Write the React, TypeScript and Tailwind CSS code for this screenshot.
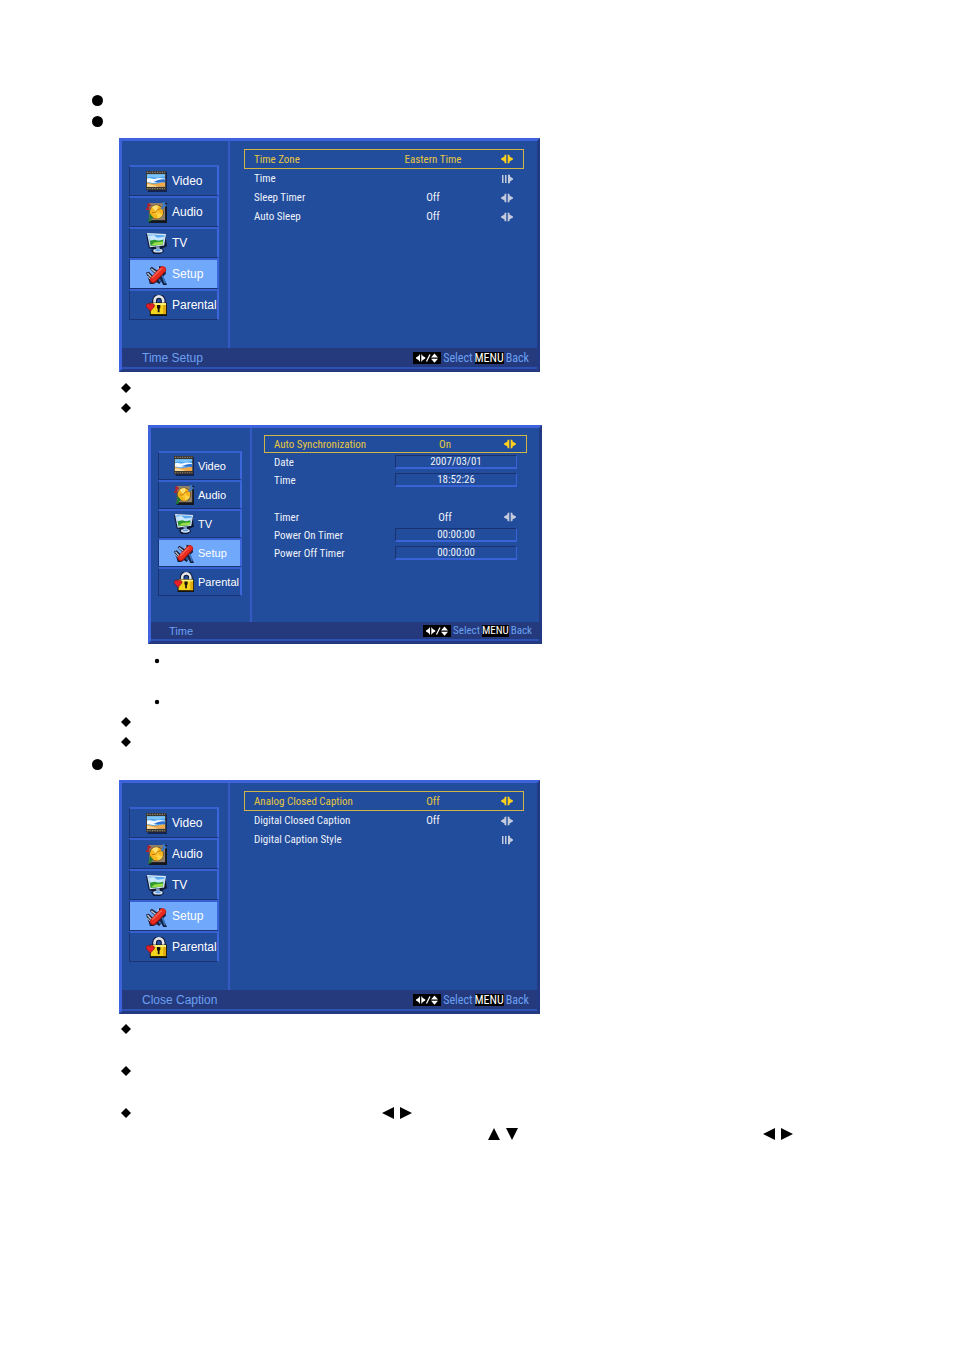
import type { ReactNode } from "react";
import { clsx } from "clsx";

type MenuRow = {
  label: string;
  value?: string;
  control: "adjust" | "enter" | "field" | "blank";
};

type MenuPanelProps = {
  title: string;
  rows: MenuRow[];
  compact?: boolean;
};

const timeSetupRows: MenuRow[] = [
  { label: "Time Zone", value: "Eastern Time", control: "adjust" },
  { label: "Time", control: "enter" },
  { label: "Sleep Timer", value: "Off", control: "adjust" },
  { label: "Auto Sleep", value: "Off", control: "adjust" },
];

const timeRows: MenuRow[] = [
  { label: "Auto Synchronization", value: "On", control: "adjust" },
  { label: "Date", value: "2007/03/01", control: "field" },
  { label: "Time", value: "18:52:26", control: "field" },
  { label: "", control: "blank" },
  { label: "Timer", value: "Off", control: "adjust" },
  { label: "Power On Timer", value: "00:00:00", control: "field" },
  { label: "Power Off Timer", value: "00:00:00", control: "field" },
];

const captionRows: MenuRow[] = [
  { label: "Analog Closed Caption", value: "Off", control: "adjust" },
  { label: "Digital Closed Caption", value: "Off", control: "adjust" },
  { label: "Digital Caption Style", control: "enter" },
];

function VideoIcon() {
  return (
    <svg viewBox="0 0 22 22" className="size-full" aria-hidden="true">
      <path d="M1 1h21v21H2z" fill="#14224f" />
      <path d="M0 0h21v20H0z" fill="#3a3630" />
      <path d="M1 1.500h19M1 18.500h19" stroke="#8f8878" strokeWidth="1.200" strokeDasharray="1.300 1.300" />
      <path d="M1 3.500h19v13H1z" fill="#4fa3ee" />
      <path d="M1 3.500h19v2L12 7 6 6 1 7z" fill="#7cc4f8" />
      <path d="M1 8c4-1 6 1 9 0s6-1 10 0v2.500c-6-1-8 2-12 2s-5-1-7-.5z" fill="#f4faff" />
      <path d="M8 11c5-1 7-3 12-2v3c-5-1-8 0-12-1z" fill="#2c70d4" />
      <path d="M1 12c5 1 7 2 11 1s5-1 8-1v4.500H1z" fill="#f2a94a" />
      <path d="M1 13.500c4 0 7 1.500 12 3H1z" fill="#fbdc9c" />
    </svg>
  );
}

function AudioIcon() {
  return (
    <svg viewBox="0 0 22 22" className="size-full" aria-hidden="true">
      <path d="M3 1h19v21H3z" fill="#15171f" />
      <path d="M3 1h17v18H3z" fill="#8c7e68" />
      <circle cx="11" cy="10.500" r="7.500" fill="#4a3210" />
      <circle cx="11" cy="10.500" r="7" fill="#f6b41d" />
      <path d="M11 10.500 6 5.500a7 7 0 0 1 7-1.700z" fill="#ffe070" />
      <path d="m11 10.500 6.500 2.500a7 7 0 0 1-5 4.300z" fill="#ffd54a" />
      <path d="m8 12 4-4 2 3-3 3z" fill="#ffc832" />
      <path d="m6 11 4 0 2-3 4-1" stroke="#b46a10" strokeWidth=".8" fill="none" />
      <path d="M2.500 2v6M0 7.500h3M2 2l3 2" stroke="#b8202a" strokeWidth="2" fill="none" />
      <path d="M18.500 0v5L16 7M18 2l3.500 2" stroke="#3b78c8" strokeWidth="2" fill="none" />
      <path d="M4.500 13v7M4 14l3 3M2 19.500h3" stroke="#1f7a36" strokeWidth="2" fill="none" />
    </svg>
  );
}

function TvIcon() {
  return (
    <svg viewBox="0 0 22 22" className="size-full" aria-hidden="true">
      <path d="m0 1 20 0 2 13-5 2 2 3-4 3H8l-3-4 3-1-5-1z" fill="#0d1834" />
      <path d="m1 0 20 1-2 12L4 15z" fill="#d9e4ef" />
      <path d="m2.500 1.500 17 .8-1.700 9.700L5 13.500z" fill="#58a9f4" />
      <path d="m3 3 5-1 4 3 7-1-.8 4L4 8z" fill="#c8e6fd" />
      <path d="m4 8 5-1 4 1 5-1-.6 5L5 13.500z" fill="#2f9a2c" />
      <path d="m5 13 4-3 9-1-.5 3z" fill="#9be048" />
      <path d="M10 14h4l1 3.500h-4z" fill="#7d93b4" />
      <ellipse cx="12.500" cy="18.500" rx="5" ry="2" fill="#cfe2f6" />
      <ellipse cx="12.500" cy="18" rx="3" ry="1" fill="#5c9ee4" />
    </svg>
  );
}

function SetupIcon() {
  return (
    <svg viewBox="0 0 22 22" className="size-full" aria-hidden="true">
      <path d="m0 9 3-1 5 5 2-2-6-6 2-2 6 4 2-5 3 1 3 3 1 4-3 3 4 9h-4l-2-4-2 3-3-2-3 2H4l-1-4z" fill="#16203c" />
      <path d="m1.500 9.500 4.500 5M5.500 5l5 4M12.500 3l1 3" stroke="#b9c4d0" strokeWidth="1.500" />
      <path d="m1.500 12.500 3 3.500" stroke="#e6ebf0" strokeWidth="1" />
      <path d="m17 12 3 8M14 16l1 2.500" stroke="#3674c4" strokeWidth="1.800" />
      <path d="M7.500 16.500 17.500 6" stroke="#a81612" strokeWidth="7" strokeLinecap="round" />
      <path d="m7.500 15.800 10-10.300" stroke="#ea2c20" strokeWidth="5.800" strokeLinecap="round" />
      <path d="m7 14 9-9" stroke="#f76a58" strokeWidth="1.300" strokeLinecap="round" />
    </svg>
  );
}

function ParentalIcon() {
  return (
    <svg viewBox="0 0 22 22" className="size-full" aria-hidden="true">
      <path d="M9 9V6a4.500 4.500 0 0 1 9 0v3" stroke="#101733" strokeWidth="5" fill="none" />
      <path d="M9 9V6a4.500 4.500 0 0 1 9 0v3" stroke="#e3e6ea" strokeWidth="2.800" fill="none" />
      <path d="M4 8h18v14H4z" fill="#17130a" />
      <path d="M5 8.500h16V20H5z" fill="#f5d51c" />
      <path d="M5 8.500h16v2H5z" fill="#fff17a" />
      <path d="M18 10.500h3V20h-3z" fill="#dfa90f" />
      <path d="M11.500 10.500h3.500v3l-.8.8V18h-1.900v-3.700l-.8-.8z" fill="#17130a" />
      <path d="M4.500 17 .5 12.500a2.300 2.300 0 0 1 4-2.500 2.300 2.300 0 0 1 4 2.500z" fill="#e51f26" stroke="#6a1018" strokeWidth=".6" />
    </svg>
  );
}

const sections = [
  { name: "Video", Icon: VideoIcon },
  { name: "Audio", Icon: AudioIcon },
  { name: "TV", Icon: TvIcon },
  { name: "Setup", Icon: SetupIcon },
  { name: "Parental", Icon: ParentalIcon },
];

function AdjustArrows({ className }: { className?: string }) {
  return (
    <svg viewBox="0 0 12 10" className={clsx("h-2.5 w-3", className)} aria-hidden="true">
      <path d="M5.300.5v9L3.500 9V7.500L0 5.500v-1l3.500-2V1zM6.700.5v9L8.500 9V7.500l3.500-2v-1l-3.500-2V1z" fill="currentColor" />
    </svg>
  );
}

function EnterArrow() {
  return (
    <svg viewBox="0 0 12 10" className="h-2.5 w-3 text-[#c3cbdc]" aria-hidden="true">
      <path d="M1 1h1.500v8H1zM4 1h1.500v8H4zM7 .5 9 1v1.500l3 2v1l-3 2V9l-2 .5z" fill="currentColor" />
    </svg>
  );
}

function KeyArrows() {
  return (
    <svg viewBox="0 0 24 10" className="h-2.5 w-6" aria-hidden="true">
      <path d="M5 1v8L3.500 7 1 5.500v-1L3.500 3zM6.300 1v8l1.500-2 2.500-1.500v-1L7.800 3zM16 4.500h7L19.500.5zM16 5.700h7l-3.500 4z" fill="#fff" />
      <path d="m11.500 8.500 3.500-7" stroke="#fff" strokeWidth="1.200" />
    </svg>
  );
}

function MenuPanel({ title, rows, compact = false }: MenuPanelProps) {
  return (
    <section
      aria-label={title}
      className={clsx(
        "w-full border-3 border-t-[#3d62dc] border-r-[#213a83] border-b-[#243a80] border-l-[#3d62dc] bg-[#224c9c] font-['Liberation_Sans',Arial,sans-serif]",
        compact ? "max-w-[394px] text-[11px]" : "max-w-[421px] text-xs",
      )}
    >
      <div className="flex">
        <nav
          aria-label={`${title} sections`}
          className={clsx("shrink-0 pl-[7px]", compact ? "pt-[23px] pr-2 pb-[26px]" : "pt-6 pr-[9px] pb-7")}
        >
          {sections.map(({ name, Icon }) => (
            <button
              key={name}
              type="button"
              aria-current={name === "Setup" ? "page" : undefined}
              className={clsx(
                "flex items-center border-t-2 border-r-2 border-b border-l border-t-[#3560cf] border-r-[#3d66dd] border-b-[#1c3373] border-l-[#1c3373] text-white",
                compact ? "h-[29px] w-[84px] gap-1 pl-[15px]" : "h-[31px] w-[90px] gap-[5px] pl-4",
                name === "Setup" && "bg-[#70a8fc]",
              )}
            >
              <span className={clsx("shrink-0", compact ? "size-5" : "size-[21px]")}>
                <Icon />
              </span>
              {name}
            </button>
          ))}
        </nav>

        <div
          className={clsx(
            "min-w-0 flex-1 border-l-2 border-[#3558c2] font-['Roboto_Condensed',Roboto,sans-serif] text-[11px]",
            compact ? "pt-[7px] pr-3 pl-3" : "pt-2 pr-[13px] pl-3.5",
          )}
        >
          {rows.map((row, index) => (
            <MenuItem key={index} row={row} selected={index === 0} compact={compact} />
          ))}
        </div>
      </div>

      <footer
        className={clsx(
          "flex items-center border-b-2 border-[#2b52b4] bg-[#243a7c] text-[#6ba0f2]",
          compact ? "h-[19px] pt-px pr-[7px] pl-[18px]" : "h-[21px] pr-2 pl-5",
        )}
      >
        <h2>{title}</h2>
        <div className="ml-auto flex items-center gap-0.5 font-['Roboto_Condensed',Roboto,sans-serif] leading-3">
          <span className="flex h-3 items-center bg-black px-0.5">
            <KeyArrows />
          </span>
          <span>Select</span>
          <kbd className="bg-black font-['Roboto_Condensed',Roboto,sans-serif] text-white">MENU</kbd>
          <span>Back</span>
        </div>
      </footer>
    </section>
  );
}

function MenuItem({ row, selected, compact }: { row: MenuRow; selected: boolean; compact: boolean }) {
  const { label, value, control } = row;

  if (control === "blank") {
    return <div className="h-[19px]" />;
  }

  return (
    <label
      className={clsx(
        "flex items-center border pr-[9px] pl-[9px]",
        compact ? "h-[18px]" : selected ? "h-5" : "h-[19px]",
        selected ? "border-[#d2b542] text-[#e6c83e]" : "border-transparent text-[#eef2fb]",
      )}
    >
      <span className="min-w-0 flex-1 pt-0.5 whitespace-nowrap">{label}</span>
      {control === "field" && (
        <input
          readOnly
          value={value}
          className="h-3.5 w-[122px] border border-b-2 border-t-[#1b3271] border-r-[#3b63d8] border-b-[#3b63d8] border-l-[#1b3271] pt-0.5 text-center outline-none"
        />
      )}
      {(control === "adjust" || control === "enter") && (
        <>
          <output className={clsx("shrink-0 pt-0.5 text-center", compact ? "w-[116px]" : "w-[134px]")}>{value}</output>
          <button
            type="button"
            aria-label={control === "adjust" ? `Change ${label}` : `Open ${label}`}
            className="flex w-3.5 shrink-0 justify-center"
          >
            {control === "enter" ? (
              <EnterArrow />
            ) : (
              <AdjustArrows className={selected ? "text-[#ffd01c]" : "text-[#c3cbdc]"} />
            )}
          </button>
        </>
      )}
    </label>
  );
}

function Marker({ shape }: { shape: "disc" | "diamond" | "dot" }) {
  return (
    <svg viewBox="0 0 12 12" className="size-3" aria-hidden="true">
      {shape === "disc" && <circle cx="6.500" cy="6.500" r="5.500" />}
      {shape === "diamond" && <path d="m6 1 5 5-5 5-5-5z" />}
      {shape === "dot" && <circle cx="6" cy="6" r="2.200" />}
    </svg>
  );
}

function Line({ shape, className, children }: { shape: "disc" | "diamond" | "dot"; className: string; children?: ReactNode }) {
  return (
    <li className={className}>
      <div className="flex h-5 items-center">
        <Marker shape={shape} />
        {children}
      </div>
    </li>
  );
}

function Triangles({ vertical = false }: { vertical?: boolean }) {
  return (
    <svg viewBox="0 0 30 12" className="h-3 w-[30px]" aria-hidden="true">
      <path d={vertical ? "M0 12h12L6 0zM18 0h12l-6 12z" : "M12 0v12L0 6zM18 0v12l12-6z"} />
    </svg>
  );
}

export default function App() {
  return (
    <main className="min-h-screen bg-white pt-[90px] pr-6 pb-16 pl-[91px] text-black">
      <ul>
        <Line shape="disc" className="h-[21px]" />
        <Line shape="disc" className="h-[21px]" />
      </ul>
      <div className="mt-1.5 pl-7">
        <MenuPanel title="Time Setup" rows={timeSetupRows} />
      </div>

      <ul className="mt-1.5 pl-[29px]">
        <Line shape="diamond" className="h-5" />
        <Line shape="diamond" className="h-5" />
      </ul>
      <div className="mt-[7px] pl-[57px]">
        <MenuPanel title="Time" rows={timeRows} compact />
      </div>
      <ul className="mt-[7px] pl-[60px]">
        <Line shape="dot" className="h-[41px]" />
        <Line shape="dot" className="h-5" />
      </ul>
      <ul className="pl-[29px]">
        <Line shape="diamond" className="h-5" />
        <Line shape="diamond" className="h-5" />
      </ul>

      <ul className="pt-0.5">
        <Line shape="disc" className="h-[22px]" />
      </ul>
      <div className="mt-1 pl-7">
        <MenuPanel title="Close Caption" rows={captionRows} />
      </div>
      <ul className="mt-[5px] pl-[29px]">
        <Line shape="diamond" className="h-[42px]" />
        <Line shape="diamond" className="h-[42px]" />
        <Line shape="diamond" className="h-[21px]">
          <span className="pl-[250px]">
            <Triangles />
          </span>
        </Line>
      </ul>
      <div className="flex h-5 items-center gap-[245px] pl-[397px]">
        <Triangles vertical />
        <Triangles />
      </div>
    </main>
  );
}
